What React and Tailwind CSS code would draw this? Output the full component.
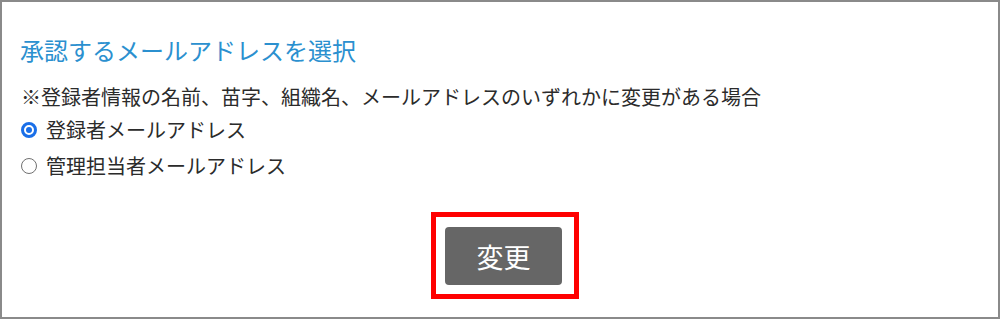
import React, { useState } from 'react';

const OPTIONS = ['登録者メールアドレス', '管理担当者メールアドレス'];

function Radio({ checked }) {
    return checked ? (
        <span className="flex items-center justify-center w-[16px] h-[16px] rounded-full border-[3px] border-[#1a6fe8] bg-white">
            <span className="block w-[6px] h-[6px] rounded-full bg-[#1a6fe8]"></span>
        </span>
    ) : (
        <span className="block w-[16px] h-[16px] rounded-full border-[1.5px] border-[#707070] bg-white"></span>
    );
}

export default function App() {
    const [selected, setSelected] = useState(0);

    return (
        <div className="w-[1000px] h-[319px] bg-white overflow-hidden" style={{ fontFamily: '"Noto Sans CJK JP", "Noto Sans", sans-serif' }}>
            <div className="h-[319px] border-2 border-[#8a8a8a] pl-[18px] pt-[33px] flex flex-col text-[#2b2b2b]">
                {/* Title */}
                <h2 className="text-[24px] leading-[30px] text-[#2b90cf] font-normal">
                    承認するメールアドレスを選択
                </h2>

                {/* Note */}
                <p className="mt-[17px] text-[20px] leading-[30px] pl-[1px]">
                    ※登録者情報の名前、苗字、組織名、メールアドレスのいずれかに変更がある場合
                </p>

                {/* Options */}
                <div className="flex flex-col">
                    {OPTIONS.map((label, idx) => (
                        <label
                            key={idx}
                            onClick={() => setSelected(idx)}
                            className="flex items-center h-[36px] cursor-pointer"
                        >
                            <span className="block shrink-0 ml-[1px] mr-[9px]">
                                <Radio checked={selected === idx} />
                            </span>
                            <span className="text-[20px] leading-[30px]">{label}</span>
                        </label>
                    ))}
                </div>

                {/* Submit */}
                <div className="mt-[28px] flex justify-center pl-[10px] pr-[18px]">
                    <div className="border-[5px] border-[#ff0000] pt-[10px] pb-[9px] pl-[9px] pr-[12px]">
                        <button className="w-[117px] h-[58px] rounded-[4px] bg-[#666666] text-white text-[27px] leading-none flex items-center justify-center">
                            変更
                        </button>
                    </div>
                </div>
            </div>
        </div>
    );
}
